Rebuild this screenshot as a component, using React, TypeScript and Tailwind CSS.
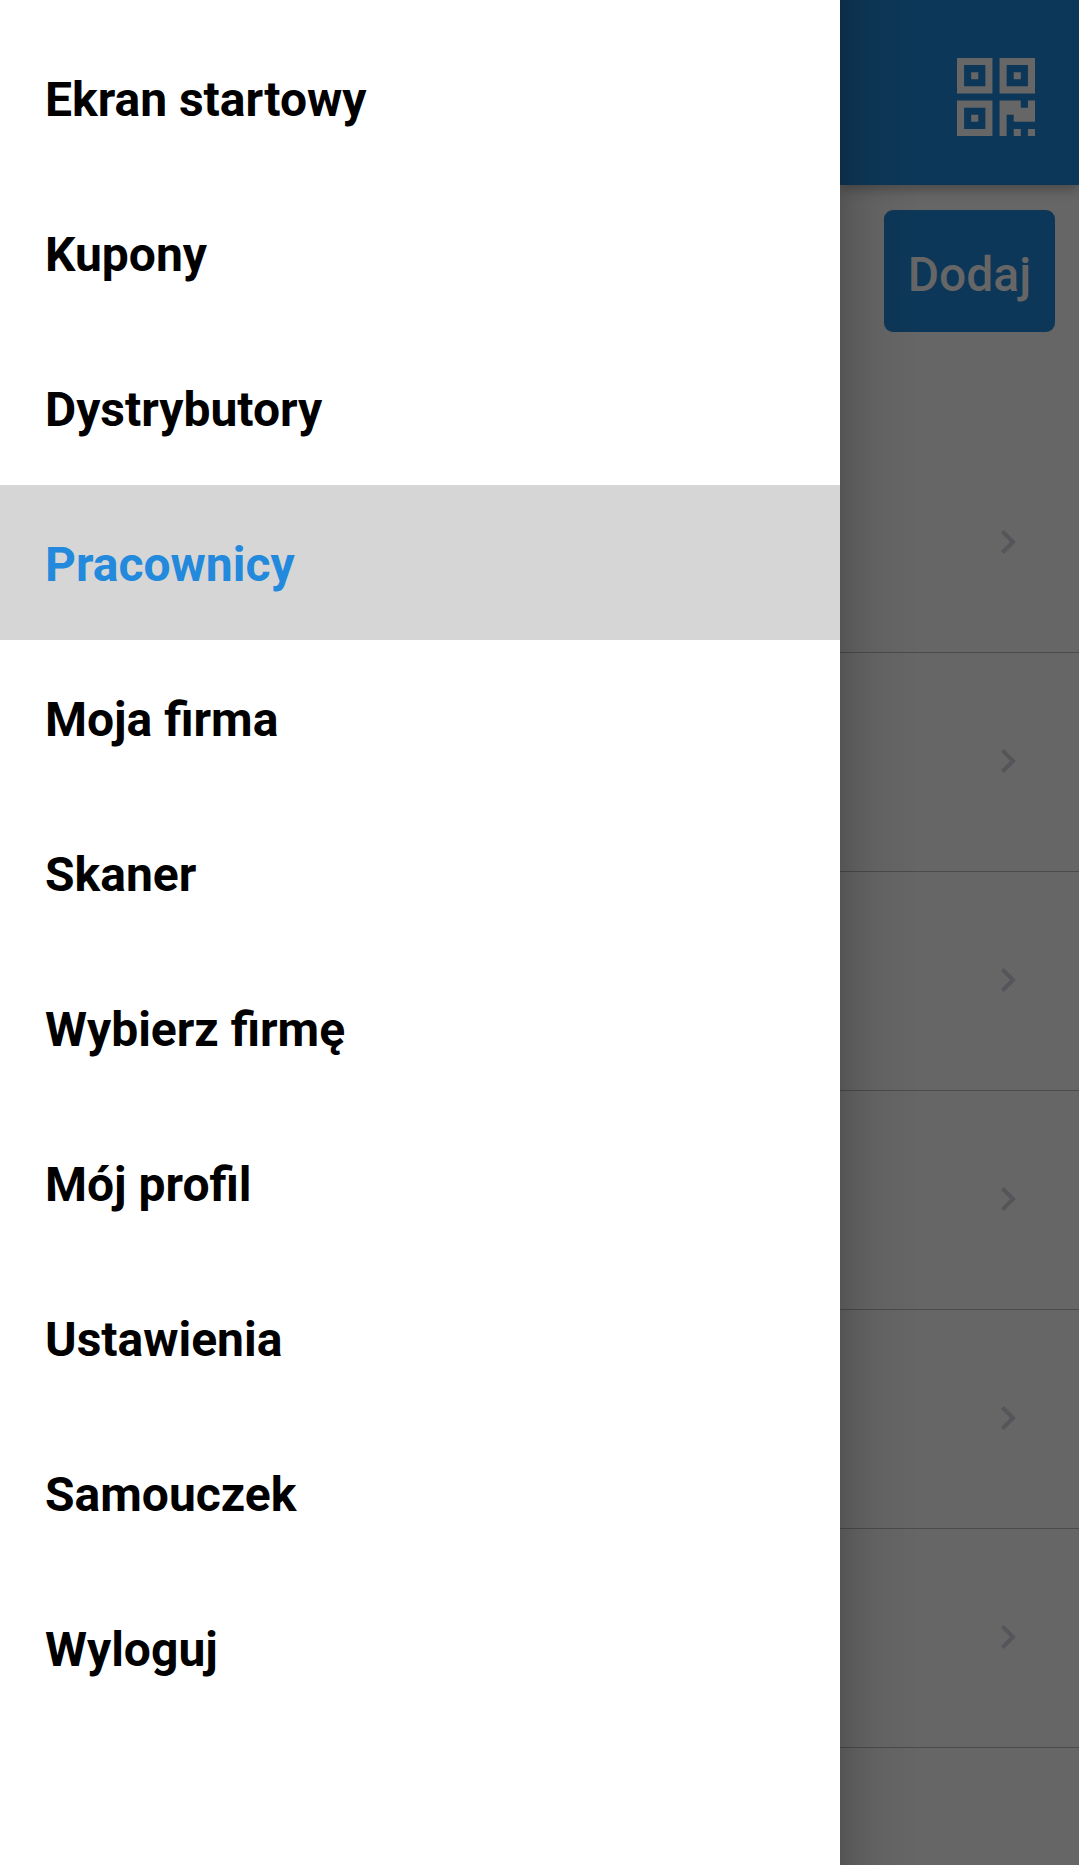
const items = ['Ekran startowy', 'Kupony', 'Dystrybutory', 'Pracownicy', 'Moja firma', 'Skaner', 'Wybierz firmę', 'Mój profil', 'Ustawienia', 'Samouczek', 'Wyloguj'];
const rows = [0, 1, 2, 3, 4, 5];

function QrIcon() {
  return (
    <svg width="78" height="78" viewBox="0 0 11 11" fill="#666666" fillRule="evenodd" aria-hidden="true">
      <path d="M0 0H5V5H0ZM1 1V4H4V1ZM2 2H3V3H2Z" />
      <path d="M6 0H11V5H6ZM7 1V4H10V1ZM8 2H9V3H8Z" />
      <path d="M0 6H5V11H0ZM1 7V10H4V7ZM2 8H3V9H2Z" />
      <path d="M6 6H9V7H10V6H11V9H8V8H7V11H6ZM8 10H9V11H8ZM10 10H11V11H10Z" />
    </svg>
  );
}

function Chevron() {
  return (
    <svg width="15" height="24" viewBox="8.59 6 7.5 12" fill="#55565a" aria-hidden="true">
      <path d="M10 6L8.59 7.41L13.17 12L8.59 16.59L10 18L16 12Z" />
    </svg>
  );
}

export default function App() {
  return (
    <div className="flex h-[1865px] w-[1079px] overflow-hidden bg-[#666666] font-[Roboto,sans-serif]">
      <nav className="w-[840px] shrink-0 bg-white pt-[20px]">
        {items.map((t) => (
          <div key={t} className={`flex h-[155px] items-center pt-[4px] pl-[45px] text-[48px] font-bold ${t === 'Pracownicy' ? 'bg-[#d6d6d6] text-[#2289dc]' : 'text-black'}`}>{t}</div>
        ))}
      </nav>
      <main className="relative flex flex-1 flex-col overflow-hidden">
        <header className="flex h-[185px] shrink-0 justify-end bg-[#0d3758] pt-[58px] pr-[44px] shadow-[0_4px_12px_rgba(0,0,0,0.3)]"><QrIcon /></header>
        <div className="flex h-[249px] shrink-0 justify-end pt-[25px] pr-[24px]">
          <button className="flex h-[122px] w-[171px] items-center justify-center rounded-[9px] bg-[#0d3758] pt-[8px] text-[48px] font-medium text-[#666666]">Dodaj</button>
        </div>
        {rows.map((r) => (
          <div key={r} className="flex h-[219px] shrink-0 items-center justify-end border-b border-[#4b4b4b] pr-[63px] pb-[2px]">
            <Chevron />
          </div>
        ))}
        <div className="pointer-events-none absolute inset-y-0 left-0 w-[80px] bg-[linear-gradient(to_right,rgba(0,0,0,0.18),rgba(0,0,0,0.1)_15px,rgba(0,0,0,0.04)_40px,transparent)]" />
      </main>
    </div>
  );
}
